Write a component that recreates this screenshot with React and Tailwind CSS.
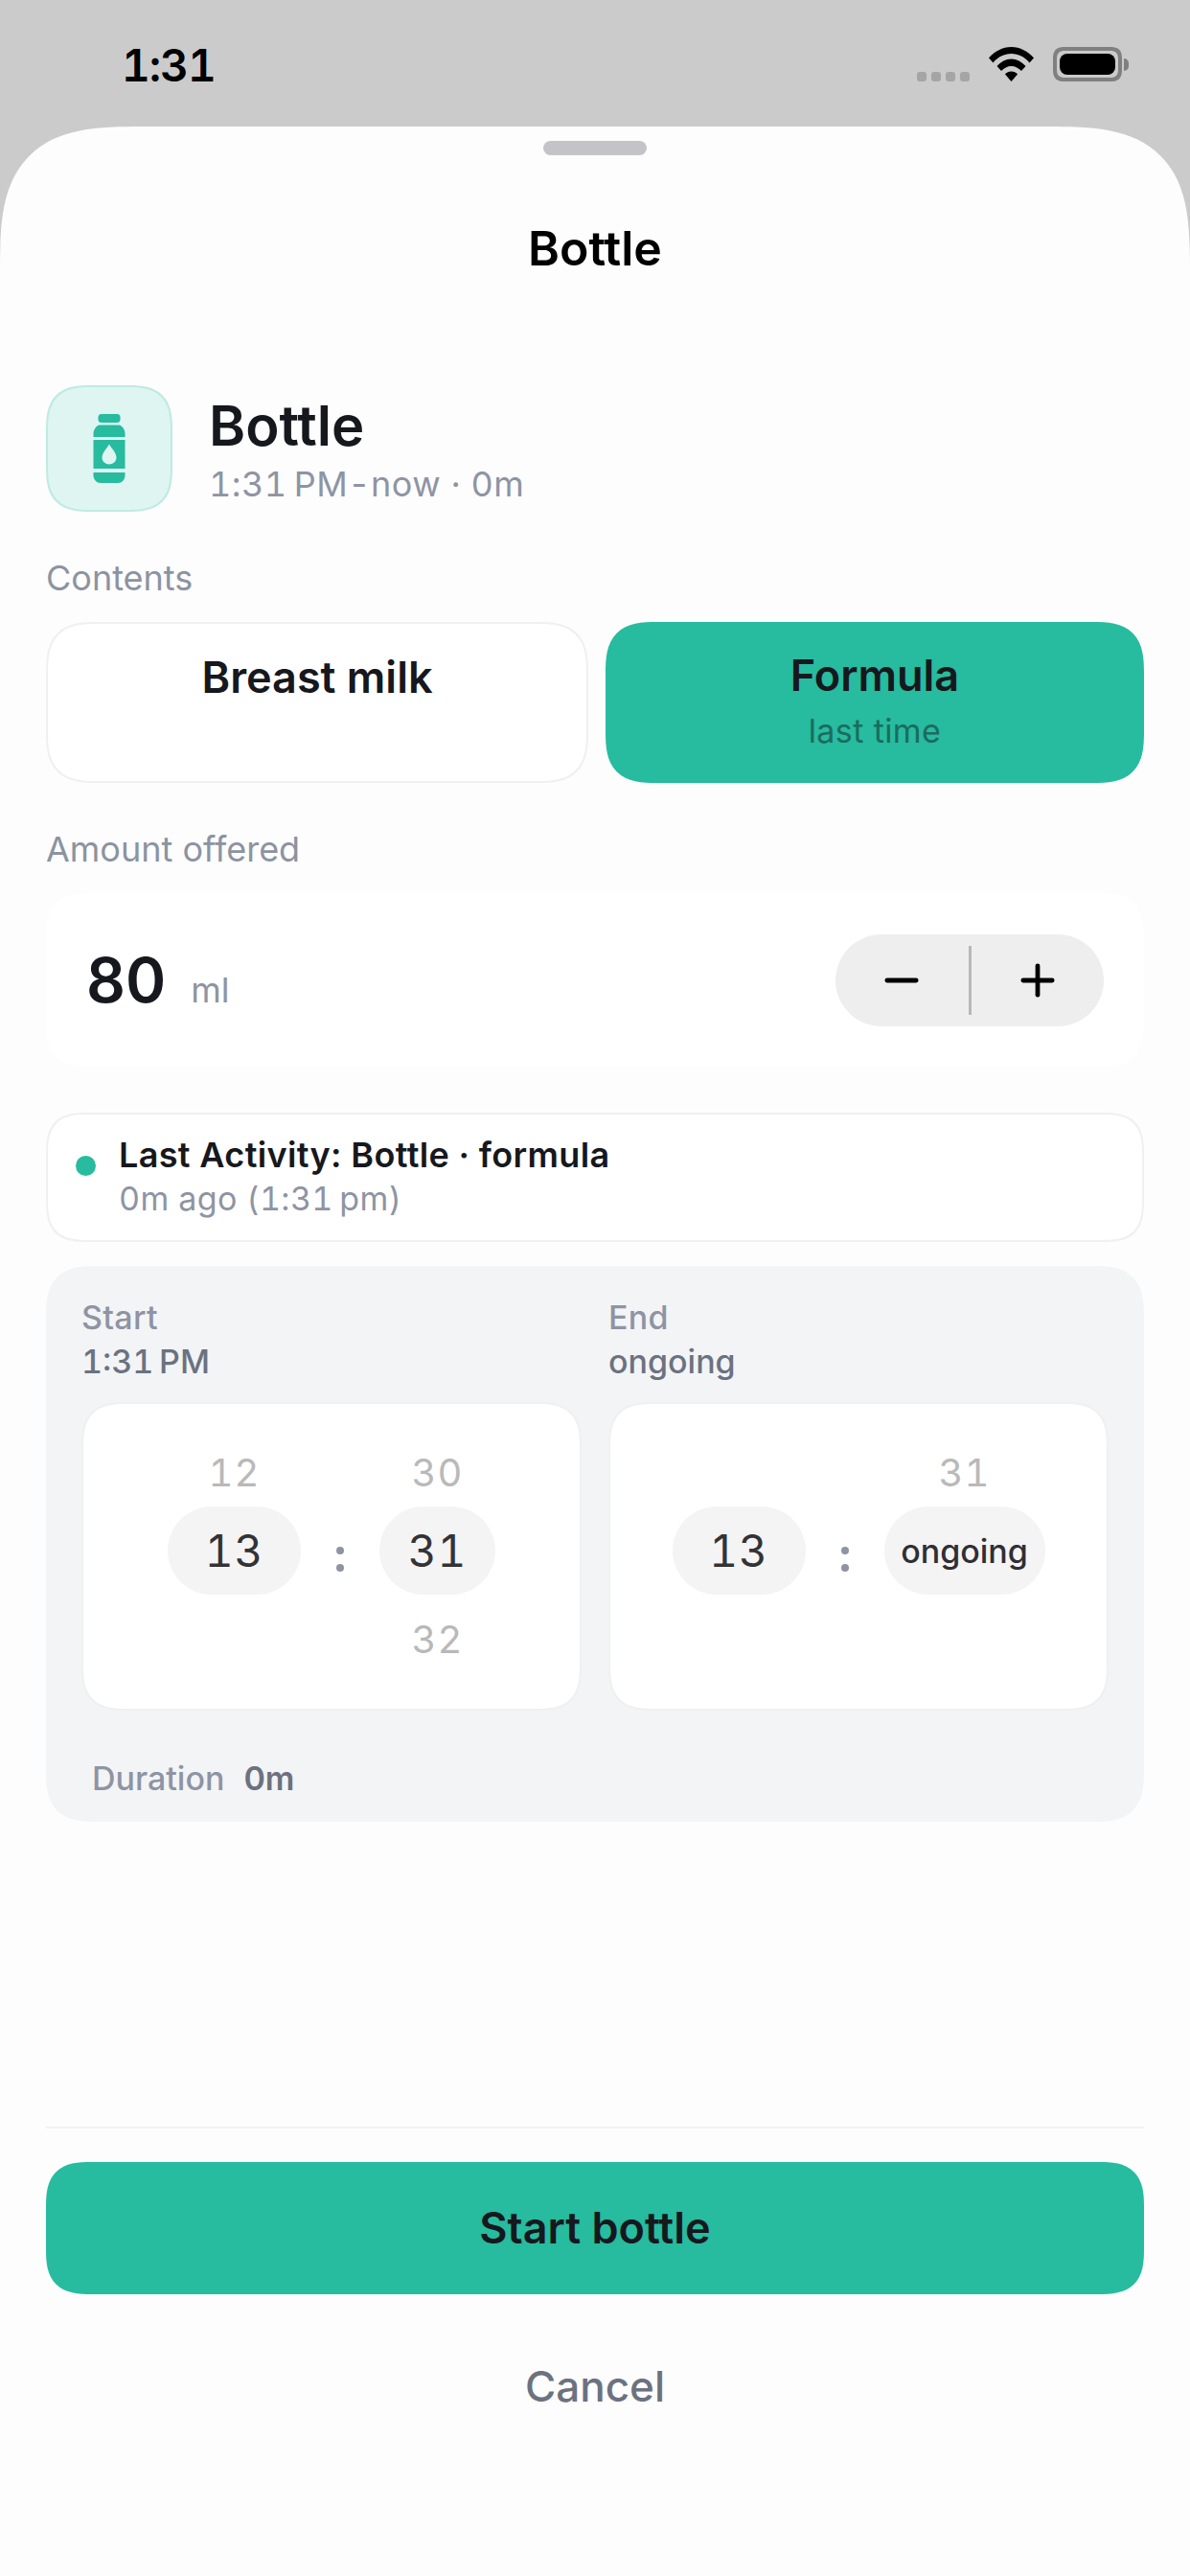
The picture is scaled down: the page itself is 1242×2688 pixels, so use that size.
import { Minus, Plus } from 'lucide-react'

const SANS = { fontFamily: 'Inter, "Noto Sans", sans-serif' }
const CARD_EDGE = 'border-2 border-[#f0f0f1] bg-white [corner-shape:superellipse(1.5)]'

function Wifi() {
  return (
    <svg width="47" height="36" viewBox="0 0 47 36" fill="#000">
      <path d="M0 11.5C6 4.5 14.5 0 23.5 0S41 4.5 47 11.5L42.5 16.5C37.5 10.5 31 7 23.5 7S9.500 10.500 4.500 16.500Z" />
      <path d="M8.500 20C12.500 15.500 18 12.500 23.500 12.500S34.500 15.500 38.500 20L34 25C31 22 27.500 20 23.500 20S16 22 13 25Z" />
      <path d="M17 28.500C18.500 26.800 21 25.500 23.500 25.500S28.500 26.800 30 28.500L23.500 36Z" />
    </svg>
  )
}

function Battery() {
  return (
    <div className="flex items-center">
      <div className="w-[72px] h-[36px] rounded-[13px] border-[4px] border-[#808080] p-[3px] [corner-shape:superellipse(1.5)]">
        <div className="w-full h-full rounded-[8px] bg-black" />
      </div>
      <div className="ml-[2px] w-[5px] h-[13px] rounded-r-full bg-[#808080]" />
    </div>
  )
}

function StatusBar() {
  return (
    <div className="h-[132px] shrink-0 relative flex items-start justify-between pl-[127px] pr-[64px] pt-[40px]">
      <span className="text-[46px] leading-[56px] font-semibold text-black tabular-nums tracking-[-1px]">1:31</span>
      <div className="flex items-start mt-[9px]">
        <div className="flex gap-[5px] mt-[26px] mr-[20px]">
          {[0, 1, 2, 3].map(i => <div key={i} className="w-[10px] h-[10px] rounded-[3px] bg-[#a5a5a5]" />)}
        </div>
        <Wifi />
        <div className="ml-[20px]"><Battery /></div>
      </div>
    </div>
  )
}

function BottleIcon() {
  return (
    <svg width="34" height="72" viewBox="0 0 34 72" fill="#27bb9f">
      <rect x="5.500" y="0" width="23" height="9" rx="3.500" />
      <path d="M7 11.500H27C30.500 11.500 33.500 17 33.500 20V24H0.500V20C0.500 17 3.500 11.500 7 11.500Z" />
      <path fillRule="evenodd" d="M0.500 27H33.500V57H0.500ZM17 31.500C14.500 36 9.500 40.500 9.500 45.500C9.500 49.500 13 52.500 17 52.500S24.500 49.500 24.500 45.500C24.500 40.500 19.500 36 17 31.500Z" />
      <path d="M0.500 61H33.500V64C33.500 68.500 30 72 26 72H8C4 72 0.500 68.500 0.500 64Z" />
    </svg>
  )
}

function Option({ label, sub, active }) {
  return (
    <div className={`flex-1 h-[168px] rounded-[54px] flex flex-col items-center pt-[27px] [corner-shape:superellipse(1.5)] ${active ? 'bg-[#27bb9f]' : 'border-2 border-[#f0f0f1] bg-white'}`}>
      <span className="text-[45px] leading-[58px] font-semibold text-[#16181d]">{label}</span>
      {sub && <span className="text-[34px] leading-[40px] mt-[9px] tracking-[0.4px] text-[#1b6c5e]">{sub}</span>}
    </div>
  )
}

function Wheel({ top, value, bottom, pillClass, small }) {
  return (
    <div className="flex flex-col items-center">
      <span className="h-[58px] mb-[6px] text-[40px] leading-[58px] text-[#b9b9b9] tabular-nums tracking-[1px]">{top}</span>
      <div className={`h-[92px] rounded-[46px] bg-[#f4f4f5] flex items-center justify-center shrink-0 ${pillClass}`}>
        <span className={small ? 'text-[34px] font-medium text-[#2f2f33]' : 'text-[46px] text-[#333336] tabular-nums tracking-[1px]'}>{value}</span>
      </div>
      <span className="h-[58px] mt-[18px] text-[40px] leading-[58px] text-[#b9b9b9] tabular-nums tracking-[1px]">{bottom}</span>
    </div>
  )
}

function Colon() {
  return (
    <div className="flex flex-col gap-[10px] mx-[37px] mt-[6px]">
      <div className="w-[8px] h-[8px] rounded-full bg-[#8e94a3]" />
      <div className="w-[8px] h-[8px] rounded-full bg-[#8e94a3]" />
    </div>
  )
}

function TimeColumn({ label, value, children }) {
  return (
    <div className="flex-1 flex flex-col">
      <span className="text-[34px] leading-[40px] font-medium tracking-[0.3px] text-[#8e94a3]">{label}</span>
      <span className="text-[34px] leading-[40px] mt-[6px] font-medium tabular-nums text-[#6b7280]">{value}</span>
      <div className={`h-[322px] mt-[22px] rounded-[48px] flex items-center justify-center ${CARD_EDGE}`}>
        {children}
      </div>
    </div>
  )
}

export default function App() {
  return (
    <div className="w-[1242px] h-[2688px] bg-[#cbcbcb] flex flex-col overflow-hidden" style={SANS}>
      <StatusBar />

      <div className="flex-1 bg-[#fdfdfd] rounded-t-[150px] [corner-shape:superellipse(1.6)] flex flex-col px-[48px]">
        <div className="w-[108px] h-[15px] mt-[15px] self-center rounded-full bg-[#c4c4c8]" />
        <h1 className="mt-[67px] h-[60px] text-center text-[50px] leading-[60px] font-semibold text-black">Bottle</h1>

        {/* Header */}
        <div className="flex items-center gap-[38px] mt-[113px]">
          <div className="w-[132px] h-[132px] rounded-[48px] border-2 border-[#bdebe2] bg-[#dff5f1] flex items-center justify-center [corner-shape:superellipse(1.5)]">
            <BottleIcon />
          </div>
          <div className="flex flex-col">
            <span className="text-[58px] leading-[70px] font-semibold text-[#16181d]">Bottle</span>
            <span className="text-[36px] leading-[44px] mt-[4px] tabular-nums tracking-[0.5px] text-[#8e94a3]">{'1:31\u202fPM-now · 0m'}</span>
          </div>
        </div>

        <span className="mt-[47px] text-[36px] leading-[44px] text-[#8c93a1]">Contents</span>
        <div className="flex gap-[18px] mt-[24px]">
          <Option label="Breast milk" />
          <Option label="Formula" sub="last time" active />
        </div>

        <span className="mt-[47px] text-[36px] leading-[44px] text-[#8c93a1]">Amount offered</span>
        <div className="mt-[24px] h-[181px] rounded-[48px] bg-white [corner-shape:superellipse(1.5)] flex items-center justify-between pl-[42px] pr-[42px]">
          <div className="flex items-baseline gap-[26px]">
            <span className="text-[64px] font-semibold text-[#16181d]">80</span>
            <span className="text-[36px] text-[#8e94a3]">ml</span>
          </div>
          <div className="w-[280px] h-[96px] rounded-full bg-[#eeeeee] flex items-center">
            <div className="flex-1 flex justify-center"><Minus size={52} strokeWidth={2.2} color="#000" /></div>
            <div className="w-[3px] h-[72px] bg-[#b8b8b8]" />
            <div className="flex-1 flex justify-center"><Plus size={52} strokeWidth={2.2} color="#000" /></div>
          </div>
        </div>

        {/* Last activity */}
        <div className={`mt-[48px] h-[135px] rounded-[44px] flex items-center pl-[29px] ${CARD_EDGE}`}>
          <div className="w-[21px] h-[21px] rounded-full bg-[#27bb9f] mb-[24px]" />
          <div className="flex flex-col ml-[24px] -mt-[3px]">
            <span className="text-[36px] leading-[44px] font-semibold tracking-[0.35px] text-[#16181d]">Last Activity: Bottle · formula</span>
            <span className="text-[34px] leading-[40px] mt-[4px] tabular-nums tracking-[0.4px] text-[#8e94a3]">{'0m ago (1:31\u202fpm)'}</span>
          </div>
        </div>

        {/* Times */}
        <div className="mt-[25px] h-[580px] rounded-[54px] bg-[#f3f4f6] [corner-shape:superellipse(1.5)] flex flex-col pt-[34px] px-[37px]">
          <div className="flex gap-[28px]">
            <TimeColumn label="Start" value={'1:31\u202fPM'}>
              <Wheel top="12" value="13" bottom="" pillClass="w-[139px]" />
              <Colon />
              <Wheel top="30" value="31" bottom="32" pillClass="w-[121px]" />
            </TimeColumn>
            <TimeColumn label="End" value="ongoing">
              <Wheel top="" value="13" bottom="" pillClass="w-[139px]" />
              <Colon />
              <Wheel top="31" value="ongoing" bottom="" pillClass="w-[168px]" small />
            </TimeColumn>
          </div>
          <div className="flex items-baseline gap-[20px] mt-[45px] pl-[11px]">
            <span className="text-[34px] font-medium text-[#8e94a3]">Duration</span>
            <span className="text-[34px] font-semibold text-[#6b7280]">0m</span>
          </div>
        </div>

        {/* Footer */}
        <div className="mt-[318px] h-[2px] bg-[#f2f2f3]" />
        <button className="mt-[35px] h-[138px] rounded-[48px] bg-[#27bb9f] [corner-shape:superellipse(1.5)] text-[45px] font-semibold text-[#16181d]">Start bottle</button>
        <button className="mt-[63px] h-[60px] text-[44px] font-medium text-[#6b7280]">Cancel</button>
      </div>
    </div>
  )
}
